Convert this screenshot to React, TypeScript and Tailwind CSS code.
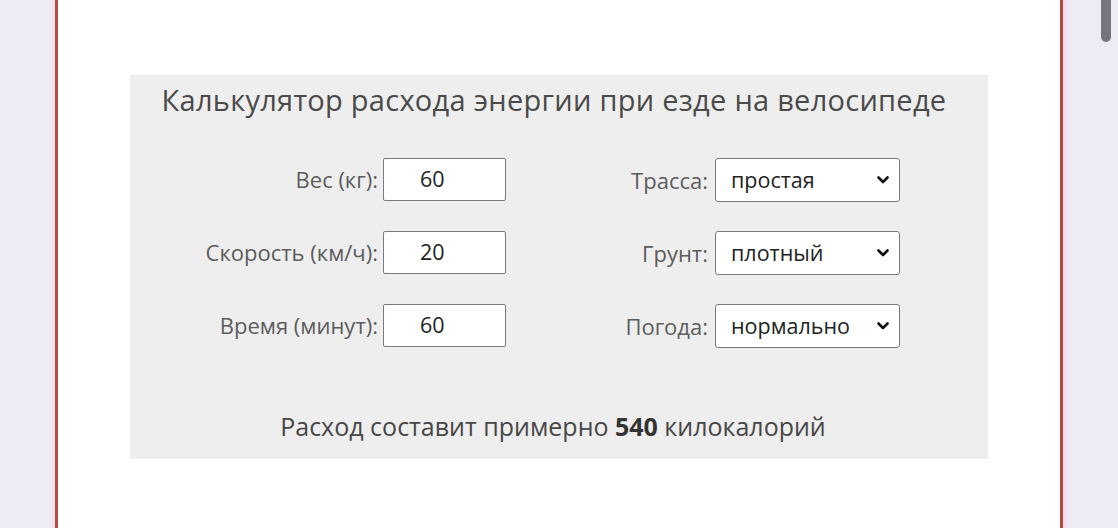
import React from 'react';

const leftFields = [
  { label: 'Вес (кг):', value: '60' },
  { label: 'Скорость (км/ч):', value: '20' },
  { label: 'Время (минут):', value: '60' },
];

const rightFields = [
  { label: 'Трасса:', value: 'простая' },
  { label: 'Грунт:', value: 'плотный' },
  { label: 'Погода:', value: 'нормально' },
];

const Chevron = () => (
  <svg width="12" height="8" viewBox="0 0 12 8" className="absolute right-[10px] top-1/2 -translate-y-1/2 pointer-events-none">
    <path d="M1.5 1.5 L6 6 L10.5 1.5" fill="none" stroke="#111" strokeWidth="2.6" strokeLinecap="round" strokeLinejoin="round" />
  </svg>
);

const App = () => {
  return (
    <div className="relative h-[528px] w-[1118px] overflow-hidden bg-[#eeeaf6]" style={{ fontFamily: '"Open Sans", "Noto Sans", sans-serif' }}>
      {/* scrollbar thumb */}
      <div className="absolute right-[7px] top-[-10px] h-[52px] w-[10px] rounded-full bg-[#77747f]" />
      <div className="ml-[51px] h-full w-[1016px] border-x-[4px] border-[#f6e0f0]">
        <div className="h-full border-x-[3px] border-[#b24a40] bg-white pt-[75px] pl-[72px]">
          <div className="w-[858px] h-[384px] bg-[#eeeeee] flex flex-col items-center">
            <h1 className="mt-[8px] pr-[10px] text-[29px] leading-[34px] text-[#4a4a4a] tracking-[0.27px] whitespace-nowrap">
              Калькулятор расхода энергии при езде на велосипеде
            </h1>
            <div className="mt-[41px] flex w-full">
              <div className="ml-[70px] flex flex-col gap-[30px]">
                {leftFields.map((f, idx) => (
                  <div key={idx} className="flex items-center">
                    <label className="w-[178px] text-right text-[22px] text-[#5c5c5c] whitespace-nowrap">{f.label}</label>
                    <div className="ml-[5px] h-[43px] w-[123px] rounded-[2px] border border-[#7a7a7a] bg-white flex items-center pl-[36px] text-[21.5px] text-[#222]">
                      {f.value}
                    </div>
                  </div>
                ))}
              </div>
              <div className="ml-[102px] flex flex-col gap-[29px]">
                {rightFields.map((f, idx) => (
                  <div key={idx} className="flex items-center">
                    <label className="w-[100px] text-right text-[22px] text-[#5c5c5c] whitespace-nowrap">{f.label}</label>
                    <div className="relative ml-[7px] h-[44px] w-[185px] rounded-[3px] border border-[#7a7a7a] bg-white flex items-center pl-[15px] text-[21.5px] text-[#222]">
                      {f.value}
                      <Chevron />
                    </div>
                  </div>
                ))}
              </div>
            </div>
            <p className="mt-[62px] pr-[12px] text-[25px] leading-[32px] text-[#474747] whitespace-nowrap">
              Расход составит примерно <strong className="font-bold text-[#333]">540</strong> килокалорий
            </p>
          </div>
        </div>
      </div>
    </div>
  );
};

export default App;
